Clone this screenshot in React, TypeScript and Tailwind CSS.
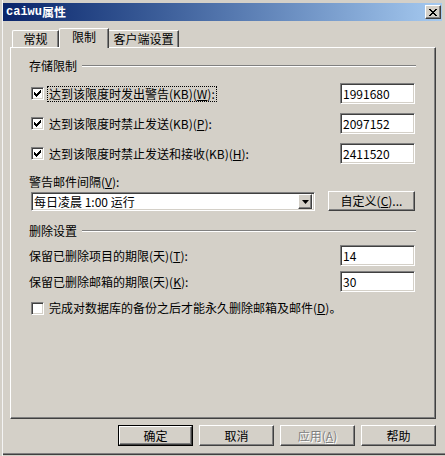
import React from 'react';

const FONT = "font-['Noto_Sans_CJK_SC','Noto_Sans',sans-serif] text-[12px] leading-[14px] text-black";
const RAISED =
  'border border-t-white border-l-white border-r-[#404040] border-b-[#404040] shadow-[inset_-1px_-1px_0_#808080] bg-[#d4d0c8]';
const SUNKEN =
  'border border-t-[#808080] border-l-[#808080] border-r-white border-b-white shadow-[inset_1px_1px_0_#404040,inset_-1px_-1px_0_#d4d0c8] bg-white';

const Check = ({ checked }: { checked: boolean }) => (
  <div className={`w-[13px] h-[13px] shrink-0 flex items-center justify-center ${SUNKEN}`}>
    {checked && (
      <svg width="7" height="7" viewBox="0 0 7 7" shapeRendering="crispEdges">
        <path d="M0 2h1v3h-1zM1 3h1v3h-1zM2 4h1v3h-1zM3 3h1v3h-1zM4 2h1v3h-1zM5 1h1v3h-1zM6 0h1v3h-1z" fill="#000" />
      </svg>
    )}
  </div>
);

const TextBox = ({ value }: { value: string }) => (
  <div className={`w-[75px] h-[21px] flex items-center pl-[2px] ${SUNKEN}`}>{value}</div>
);

const GroupHeader = ({ title, className }: { title: string; className: string }) => (
  <div className={`flex items-center h-[14px] ${className}`}>
    <span>{title}</span>
    <div className="flex-1 ml-[5px] mr-[-1px] h-[2px] border-t border-t-[#808080] border-b border-b-white" />
  </div>
);

const Mn = ({ c }: { c: string }) => <span className="underline underline-offset-1">{c}</span>;

const CheckRow = ({ label, value, focus, className }: { label: React.ReactNode; value: string; focus?: boolean; className: string }) => (
  <div className={`flex items-center justify-between h-[21px] ${className}`}>
    <div className="flex items-center ml-[2px]">
      <Check checked />
      <span className={`ml-[3px] px-[1px] border border-dotted ${focus ? 'border-black' : 'border-transparent'}`}>{label}</span>
    </div>
    <TextBox value={value} />
  </div>
);

const Button = ({ children, primary, disabled }: { children: React.ReactNode; primary?: boolean; disabled?: boolean }) => (
  <div className={`w-[75px] h-[21px] ${primary ? 'border border-black' : ''}`}>
    <div
      className={`w-full h-full flex items-center justify-center ${RAISED} ${
        disabled ? 'text-[#808080] [text-shadow:1px_1px_0_#fff]' : ''
      }`}
    >
      {children}
    </div>
  </div>
);

export default function App() {
  return (
    <div className={`w-[445px] h-[456px] flex bg-[#d4d0c8] overflow-hidden ${FONT}`}>
      <div className="w-[3px] h-full bg-[#d4d0c8] border-r border-r-[#f4f4f4] shrink-0" />
      <div className="flex-1 h-[455px] flex flex-col pt-[3px] border-b border-b-[#404040] shadow-[inset_0_-1px_0_#808080]">
        {/* title bar */}
        <div className="h-[18px] mr-[3px] flex items-center justify-between bg-gradient-to-r from-[#0a246a] to-[#a6caf0]">
          <div className="pl-[3px] text-white font-bold flex items-center">
            <span className="font-['Liberation_Mono',monospace]">caiwu</span>
            <span>属性</span>
          </div>
          <div className={`w-[16px] h-[14px] mr-[1px] flex items-center justify-center ${RAISED}`}>
            <svg width="8" height="7" viewBox="0 0 8 7" shapeRendering="crispEdges">
              <path d="M0 0h2v1h-2zM1 1h2v1h-2zM2 2h4v1h-4zM3 3h2v1h-2zM2 4h4v1h-4zM1 5h2v1h-2zM0 6h2v1h-2zM6 0h2v1h-2zM5 1h2v1h-2zM5 5h2v1h-2zM6 6h2v1h-2z" fill="#000" />
            </svg>
          </div>
        </div>

        <div className="ml-[7px] w-[426px] mt-[7px] flex flex-col">
          {/* tabs */}
          <div className="flex items-end h-[19px] pl-[2px]">
            <div className="w-[47px] h-[17px] flex items-center justify-center border-t border-l border-t-white border-l-white border-r border-r-[#404040] shadow-[inset_-1px_0_0_#808080] rounded-tl-[2px]">
              常规
            </div>
            <div className="relative z-10 -mb-px w-[50px] h-[20px] pb-[3px] flex items-center justify-center bg-[#d4d0c8] border-t border-l border-t-white border-l-white border-r border-r-[#404040] shadow-[inset_-1px_0_0_#808080] rounded-tl-[2px]">
              限制
            </div>
            <div className="w-[70px] h-[17px] flex items-center justify-center border-t border-t-white border-r border-r-[#404040] shadow-[inset_-1px_0_0_#808080]">
              客户端设置
            </div>
          </div>

          {/* panel */}
          <div className="h-[372px] flex flex-col pl-[18px] pr-[20px] border border-t-white border-l-white border-r-[#404040] border-b-[#404040] shadow-[inset_-1px_-1px_0_#808080]">
            <GroupHeader title="存储限制" className="mt-[11px]" />
            <CheckRow
              className="mt-[10px]"
              focus
              value="1991680"
              label={<>达到该限度时发出警告(KB)(<Mn c="W" />):</>}
            />
            <CheckRow className="mt-[9px]" value="2097152" label={<>达到该限度时禁止发送(KB)(<Mn c="P" />):</>} />
            <CheckRow className="mt-[9px]" value="2411520" label={<>达到该限度时禁止发送和接收(KB)(<Mn c="H" />):</>} />

            <div className="mt-[11px] h-[14px]">
              警告邮件间隔(<Mn c="V" />):
            </div>
            <div className="mt-[2px] h-[20px] flex items-end justify-between">
              <div className={`ml-[2px] w-[284px] h-[19px] flex items-center justify-between pl-[2px] pr-[2px] ${SUNKEN}`}>
                <span>每日凌晨 1:00 运行</span>
                <div className={`w-[14px] h-[15px] flex items-center justify-center ${RAISED}`}>
                  <svg width="7" height="4" viewBox="0 0 7 4">
                    <polygon points="0,0 7,0 3.5,4" fill="#000" />
                  </svg>
                </div>
              </div>
              <div className={`w-[87px] h-[20px] flex items-center justify-center ${RAISED}`}>
                自定义(<Mn c="C" />)...
              </div>
            </div>

            <GroupHeader title="删除设置" className="mt-[13px]" />
            <div className="mt-[7px] h-[21px] flex items-center justify-between">
              <span>保留已删除项目的期限(天)(<Mn c="T" />):</span>
              <TextBox value="14" />
            </div>
            <div className="mt-[5px] h-[21px] flex items-center justify-between">
              <span>保留已删除邮箱的期限(天)(<Mn c="K" />):</span>
              <TextBox value="30" />
            </div>
            <div className="mt-[9px] h-[14px] flex items-center ml-[2px]">
              <Check checked={false} />
              <span className="ml-[5px]">
                完成对数据库的备份之后才能永久删除邮箱及邮件(<Mn c="D" />)。
              </span>
            </div>
          </div>

          {/* buttons */}
          <div className="mt-[6px] flex justify-end gap-[6px]">
            <Button primary>确定</Button>
            <Button>取消</Button>
            <Button disabled>
              应用(<Mn c="A" />)
            </Button>
            <Button>帮助</Button>
          </div>
        </div>
      </div>
    </div>
  );
}
